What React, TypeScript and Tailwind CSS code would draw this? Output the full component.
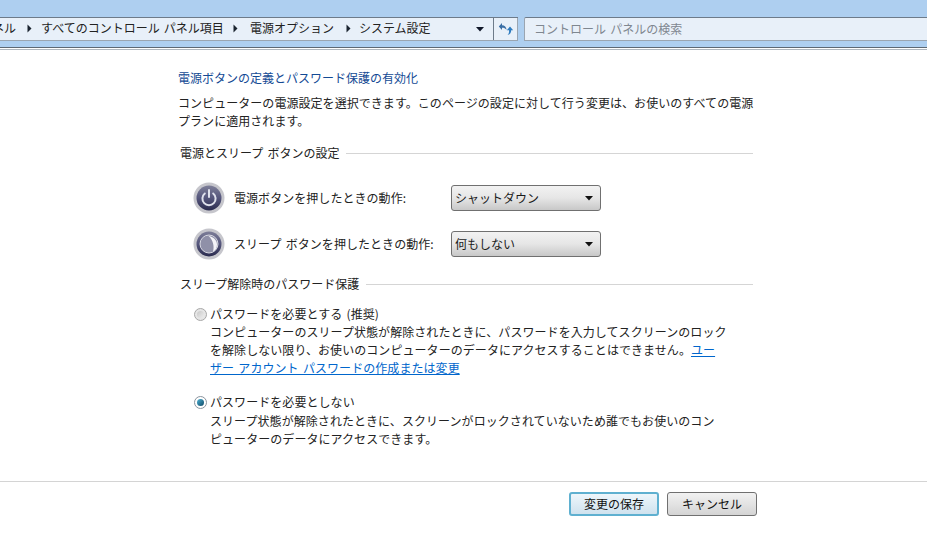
const font = { fontFamily: '"Noto Sans CJK JP", sans-serif' }

function Chevron() {
  return (
    <svg width="5" height="9" viewBox="0 0 5 9" className="shrink-0">
      <path d="M0.5 0.5 L4.5 4.5 L0.5 8.5 Z" fill="#1b2430" />
    </svg>
  )
}

function SectionTitle({ text }: { text: string }) {
  return (
    <div className="flex items-center gap-[7px] h-[18px] w-[573px] ml-[2px]">
      <span className="text-[12px] leading-[18px] text-[#222] whitespace-nowrap">{text}</span>
      <div className="flex-1 h-px bg-[#d5d5d5]" />
    </div>
  )
}

function PowerIcon({ sleep }: { sleep?: boolean }) {
  const id = sleep ? 'g2' : 'g1'
  return (
    <svg width="32" height="32" viewBox="0 0 32 32" className="shrink-0">
      <defs>
        <linearGradient id={id} x1="0" y1="0" x2="0" y2="1">
          <stop offset="0" stopColor="#7d7e98" />
          <stop offset="0.5" stopColor="#55567c" />
          <stop offset="1" stopColor="#2a2b4e" />
        </linearGradient>
      </defs>
      <circle cx="16" cy="16" r="15.5" fill="#c6c6cc" />
      <circle cx="16" cy="16" r="12.5" fill={`url(#${id})`} />
      {sleep ? (
        <>
          <circle cx="16" cy="16" r="9" fill="#8f90a8" />
          <circle cx="16" cy="16" r="9" fill="none" stroke="#d8d9e2" strokeWidth="1" />
          <path d="M15.5 8 C20 8.5 24 12 24 16.5 C24 20 22.5 22.5 20 23.5 C21.5 18 20 12 15.5 8 Z" fill="#f4f4f8" />
        </>
      ) : (
        <>
          <path d="M11.8 11.5 A6.6 6.6 0 1 0 20.2 11.5" fill="none" stroke="#dfe1ec" strokeWidth="2" strokeLinecap="round" />
          <path d="M16 8 V15" fill="none" stroke="#dfe1ec" strokeWidth="2" strokeLinecap="round" />
        </>
      )}
    </svg>
  )
}

function Select({ value }: { value: string }) {
  return (
    <div className="flex items-center justify-between w-[150px] h-[26px] rounded-[3px] border border-[#707070] bg-gradient-to-b from-[#f2f2f2] via-[#e6e6e6] to-[#c8c8c8] pl-[3px] pr-[7px]">
      <span className="text-[12px] text-[#1a1a1a]">{value}</span>
      <svg width="8" height="5" viewBox="0 0 8 5">
        <path d="M0 0 H8 L4 4.5 Z" fill="#111" />
      </svg>
    </div>
  )
}

function Radio({ on }: { on?: boolean }) {
  return (
    <div className={`flex items-center justify-center size-[13px] rounded-full border ${on ? 'border-[#8a949e] bg-white' : 'border-[#a8a8a8] bg-[#e6e6e6]'}`}>
      <div className={`size-[7px] rounded-full ${on ? 'bg-gradient-to-br from-[#4fb3d6] to-[#0d4a66]' : 'bg-gradient-to-br from-[#c8c8c8] to-[#eeeeee]'}`} />
    </div>
  )
}

export default function App() {
  return (
    <div className="w-[927px] h-[551px] bg-white overflow-hidden flex flex-col text-[#222] [word-spacing:1.5px]" style={font}>
      <div className="bg-[#aecff0] h-[47px] pt-[17px] shrink-0">
        <div className="flex h-[24px] gap-[6px]">
          <div className="flex-1 flex min-w-0 border-t border-b border-t-[#6d7b8a] border-b-[#9aa5b1] bg-[#e8f0f9]">
            <div className="flex-1 flex items-center pb-[2px] overflow-hidden text-[12px] text-[#222] whitespace-nowrap">
              <span className="w-[16px] shrink-0 flex justify-end overflow-hidden">ネル</span>
              <span className="ml-[11px]"><Chevron /></span>
              <span className="ml-[9px]">すべてのコントロール パネル項目</span>
              <span className="ml-[9px]"><Chevron /></span>
              <span className="ml-[12px]">電源オプション</span>
              <span className="ml-[12px]"><Chevron /></span>
              <span className="ml-[8px]">システム設定</span>
            </div>
            <div className="w-[13px] flex items-center mr-[4px]">
              <svg width="8" height="5" viewBox="0 0 8 5"><path d="M0 0 H8 L4 4.5 Z" fill="#10182a" /></svg>
            </div>
            <div className="w-[25px] flex items-center justify-center border-l border-r border-l-[#6d7b8a] border-r-[#9aa5b1]">
              <svg width="16" height="14" viewBox="0 0 16 14" fill="none">
                <path d="M4 1 L0.8 4.5 L4 8 V5.8 C6 5.8 7.5 6.3 8.5 8 C8.5 5 6.5 3.2 4 3.2 Z" fill="#3a6ea5" />
                <path d="M12 4.5 L15.2 8.2 H13.2 C13.2 10.5 12 12.5 9.5 13 C11 11.8 11.2 10 11 8.2 H8.8 Z" fill="#2f7cc0" />
              </svg>
            </div>
          </div>
          <div className="w-[403px] shrink-0 flex items-center pb-[1px] border-t border-b border-l border-t-[#6d7b8a] border-b-[#9aa5b1] border-l-[#9aa5b1] rounded-tl-[2px] bg-[#e8f0f9] pl-[9px] text-[12px] text-[#7f8790]">
            コントロール パネルの検索
          </div>
        </div>
      </div>
      <div className="h-[3px] shrink-0 bg-white border-t border-b border-t-[#5d6873] border-b-[#aeb6be]" />

      <div className="flex-1 pl-[178px] pt-[19px]">
        <div className="text-[12px] leading-[18px] text-[#134a94]">電源ボタンの定義とパスワード保護の有効化</div>
        <p className="mt-[7px] w-[580px] text-[12px] leading-[18px] tracking-[0.05px]">
          コンピューターの電源設定を選択できます。このページの設定に対して行う変更は、お使いのすべての電源プランに適用されます。
        </p>
        <div className="mt-[14px]">
          <SectionTitle text="電源とスリープ ボタンの設定" />
        </div>
        <div className="mt-[20px] ml-[15px] flex flex-col gap-[14px]">
          <div className="flex items-center h-[32px]">
            <PowerIcon />
            <span className="ml-[9px] w-[217px] text-[12px] tracking-[0.05px]">電源ボタンを押したときの動作:</span>
            <Select value="シャットダウン" />
          </div>
          <div className="flex items-center h-[32px]">
            <PowerIcon sleep />
            <span className="ml-[9px] w-[217px] text-[12px] whitespace-nowrap tracking-[0.05px]">スリープ ボタンを押したときの動作:</span>
            <Select value="何もしない" />
          </div>
        </div>
        <div className="mt-[15px]">
          <SectionTitle text="スリープ解除時のパスワード保護" />
        </div>
        <div className="mt-[12px] ml-[16px] flex gap-[3px]">
          <div className="pt-[3px]"><Radio /></div>
          <div className="w-[530px] text-[12px] leading-[18px] whitespace-nowrap tracking-[0.06px]">
            <div>パスワードを必要とする (推奨)</div>
            <div>コンピューターのスリープ状態が解除されたときに、パスワードを入力してスクリーンのロック</div>
            <div>
              を解除しない限り、お使いのコンピューターのデータにアクセスすることはできません。
              <span className="text-[#0066cc] underline">ユー</span>
            </div>
            <div><span className="text-[#0066cc] underline">ザー アカウント パスワードの作成または変更</span></div>
          </div>
        </div>
        <div className="mt-[16px] ml-[16px] flex gap-[3px]">
          <div className="pt-[3px]"><Radio on /></div>
          <div className="w-[530px] text-[12px] leading-[18px] whitespace-nowrap tracking-[0.06px]">
            <div className="mb-[1px]">パスワードを必要としない</div>
            <div>スリープ状態が解除されたときに、スクリーンがロックされていないため誰でもお使いのコン</div>
            <div>ピューターのデータにアクセスできます。</div>
          </div>
        </div>
      </div>

      <div className="h-[70px] shrink-0 border-t border-[#d4d4d4] flex justify-end gap-[8px] pt-[10px] pr-[170px]">
        <button className="w-[90px] h-[24px] rounded-[3px] border-2 border-[#5fb0d0] bg-gradient-to-b from-[#eef6fb] to-[#cfe2ee] text-[12px] text-[#111]">変更の保存</button>
        <button className="w-[90px] h-[24px] rounded-[3px] border border-[#707070] bg-gradient-to-b from-[#f2f2f2] to-[#d4d4d4] text-[12px] text-[#111]">キャンセル</button>
      </div>
    </div>
  )
}
